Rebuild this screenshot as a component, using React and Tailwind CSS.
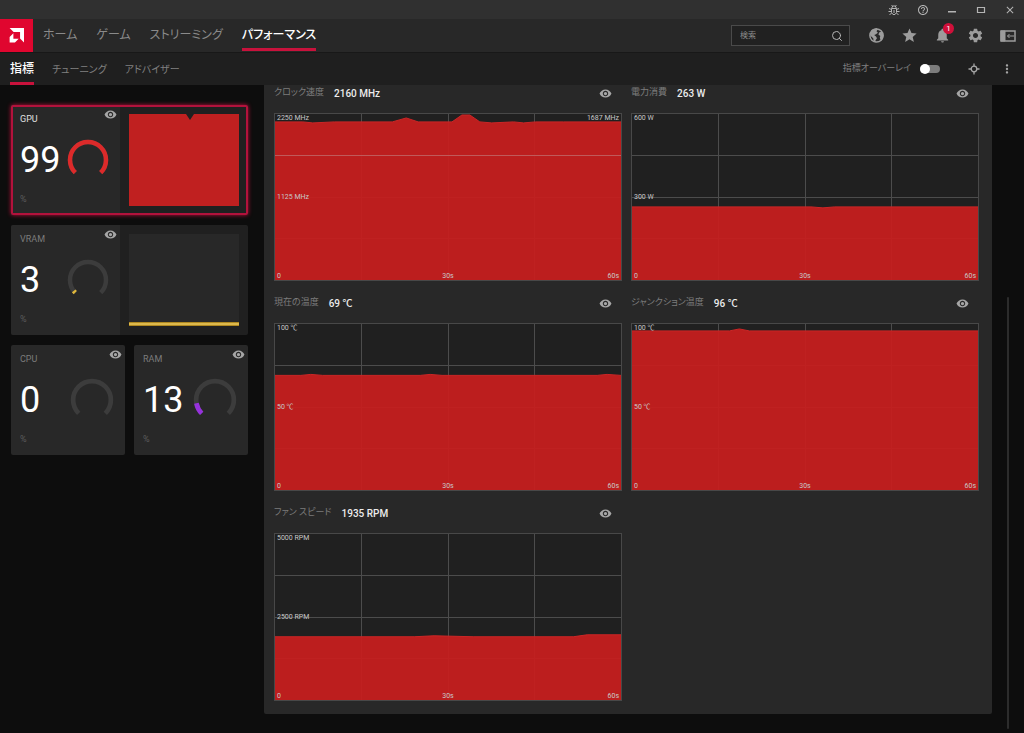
import React from "react";
import {
  MdClose,
  MdHelpOutline,
  MdMoreVert,
  MdNotifications,
  MdSettings,
  MdStar,
  MdVisibility,
} from "react-icons/md";
import { Search } from "lucide-react";

const mainTabs = ["ホーム", "ゲーム", "ストリーミング", "パフォーマンス"];
const subTabs = ["指標", "チューニング", "アドバイザー"];

// Points are [x, y] on a 348 x 168 plot.
const metrics = [
  {
    name: "クロック速度",
    value: "2160 MHz",
    top: "2250 MHz",
    mid: "1125 MHz",
    right: "1687 MHz",
    marker: true,
    points: "0,8 28,8 38,9 60,8 118,8 132,4 144,8 178,8 188,1 196,1 206,8 218,9 240,8 250,9 262,8 290,8 348,8",
  },
  {
    name: "電力消費",
    value: "263 W",
    top: "600 W",
    mid: "300 W",
    points: "0,94 180,94 192,95 204,94 348,94",
  },
  {
    name: "現在の温度",
    value: "69 ℃",
    top: "100 ℃",
    mid: "50 ℃",
    points: "0,52 26,52 36,51 48,52 146,52 156,51 168,52 324,52 334,51 348,52",
  },
  {
    name: "ジャンクション温度",
    value: "96 ℃",
    top: "100 ℃",
    mid: "50 ℃",
    points: "0,7 98,7 108,5 118,7 348,7",
  },
  {
    name: "ファン スピード",
    value: "1935 RPM",
    top: "5000 RPM",
    mid: "2500 RPM",
    points: "0,104 140,104 160,103 200,104 300,104 314,102 348,102",
  },
];

function EyeButton({ label }) {
  return (
    <button aria-label={label} className="flex text-[#a6a6a6]">
      <MdVisibility className="h-[13px] w-[13px]" />
    </button>
  );
}

function Logo() {
  return (
    <a href="#home" aria-label="AMD" className="flex h-full w-[33px] items-center justify-center bg-[#e0062f]">
      <svg viewBox="0 0 24 24" className="h-[15px] w-[15px]" fill="#fff">
        <path d="M1 0h23v23l-6.300-6.300V6.300H7.300z" />
        <path d="M7 8.500 1 14.500V23h8.500l6-6H7z" />
      </svg>
    </a>
  );
}

function BugIcon() {
  return (
    <svg viewBox="0 0 12 12" className="h-3 w-3" fill="none" stroke="currentColor">
      <path d="M3.500 4.500h5v4l-1.500 2H5l-1.500-2zM4 4.500V3l1-1h2l1 1v1.500M6 6v3" />
      <path d="M3.500 5.500 1 4.500M3.500 7.500H.5M3.500 9 1.500 11M8.500 5.500 11 4.500M8.500 7.500h3M8.500 9l2 2M4.500 2 3.500 1M7.500 2l1-1" />
    </svg>
  );
}

function GlobeIcon() {
  return (
    <svg viewBox="0 0 18 18" className="h-[17px] w-[17px]" fill="currentColor">
      <circle cx="9" cy="9" r="7" fill="none" stroke="currentColor" strokeWidth="1.600" />
      <path d="M2 8.500 4 3l5-2 1.500 1.500L9 4.500l1.500 1.500L8 8 6.500 8.500l2 1.500 1 2-1.500 2v2.500L6 15l-.5-3L3.500 10z" />
      <path d="M12 3l3 2 1.500 4-1 4-2 1.500-1-3 .5-2-2-1.500 1-2.500 2-.5z" />
    </svg>
  );
}

function DockIcon() {
  return (
    <svg viewBox="0 0 16 12" className="h-3 w-4" fill="none" stroke="currentColor">
      <path d="M1 1h14v10H1z" strokeWidth="1.500" />
      <path d="M1 1h4v10H1z" fill="currentColor" />
      <path d="M14 6H7.500M9.500 4l-2 2 2 2" />
    </svg>
  );
}

function TargetIcon() {
  return (
    <svg viewBox="0 0 12 12" className="h-3 w-3" fill="none" stroke="currentColor" strokeWidth="1.300">
      <circle cx="6" cy="6" r="2.800" />
      <path d="M6 .5v2.700M6 8.800v2.700M.5 6h2.700M8.800 6h2.700" />
    </svg>
  );
}

function TitleBar() {
  return (
    <div className="flex h-[19px] items-center justify-end gap-[17px] bg-[#303030] pr-2 text-[#b4b4b4]">
      <button aria-label="Report a bug"><BugIcon /></button>
      <button aria-label="Help"><MdHelpOutline className="h-3 w-3" /></button>
      <button aria-label="Minimize">
        <svg viewBox="0 0 12 12" className="h-3 w-3"><path d="M2 7h8v1.500H2z" fill="currentColor" /></svg>
      </button>
      <button aria-label="Maximize">
        <svg viewBox="0 0 12 12" className="h-3 w-3" fill="none" stroke="currentColor">
          <path d="M2.500 3.500h7v5h-7z" strokeWidth="1.200" />
        </svg>
      </button>
      <button aria-label="Close"><MdClose className="h-3 w-3" /></button>
    </div>
  );
}

function MainNav() {
  return (
    <header className="flex h-[33px] items-center bg-[#282828]">
      <Logo />
      <nav className="flex h-full gap-[19px] pb-px pl-[10px] text-xs">
        {mainTabs.map((tab) => (
          <a
            key={tab}
            href={`#${tab}`}
            className={
              tab === "パフォーマンス"
                ? "flex items-center border-b-[3px] border-[#c8123c] pt-[3px] font-medium text-white"
                : "flex items-center text-[#8a8a8a]"
            }
          >
            {tab}
          </a>
        ))}
      </nav>

      <div className="ml-auto flex items-center gap-4 pr-2 text-[#9c9c9c]">
        <label className="mr-[2px] flex h-[21px] w-[119px] items-center border border-[#4a4a4a] bg-[#212121] px-[6px]">
          <input
            type="text"
            aria-label="検索"
            placeholder="検索"
            className="w-full min-w-0 bg-transparent pl-[2px] text-[8px] placeholder:text-[#8c8c8c] focus:outline-none"
          />
          <Search className="h-3 w-3 shrink-0 text-[#b4b4b4]" />
        </label>
        <button aria-label="Web"><GlobeIcon /></button>
        <button aria-label="Favorites"><MdStar className="h-[17px] w-[17px]" /></button>
        <button aria-label="Notifications" className="relative">
          <MdNotifications className="h-[17px] w-[17px]" />
          <span className="absolute -top-1 -right-[3px] flex h-[11px] w-[11px] items-center justify-center rounded-full bg-[#d0103a] text-[8px] text-white">
            1
          </span>
        </button>
        <button aria-label="Settings"><MdSettings className="h-[17px] w-[17px]" /></button>
        <button aria-label="Dock panel"><DockIcon /></button>
      </div>
    </header>
  );
}

function SubNav() {
  return (
    <div className="flex h-[33px] items-center border-t border-[#181818] bg-[#1f1f1f]">
      <nav className="flex h-full gap-[18px] pl-[10px]">
        {subTabs.map((tab) => (
          <a
            key={tab}
            href={`#${tab}`}
            className={
              tab === "指標"
                ? "flex items-center border-b-[3px] border-[#c8123c] pt-[3px] text-xs font-medium text-white"
                : "flex items-center text-[10px] text-[#808080]"
            }
          >
            {tab}
          </a>
        ))}
      </nav>
      <div className="ml-auto flex items-center pr-[10px] text-[#a6a6a6]">
        <label className="flex items-center gap-[9px] text-[9px] text-[#808080]">
          指標オーバーレイ
          <span className="relative flex items-center">
            <input
              type="checkbox"
              role="switch"
              className="h-2 w-5 appearance-none rounded-full bg-[#7c7c7c]"
            />
            <span className="absolute left-0 h-[10px] w-[10px] rounded-full bg-white" />
          </span>
        </label>
        <button aria-label="Target" className="ml-[28px]"><TargetIcon /></button>
        <button aria-label="More" className="ml-5"><MdMoreVert className="h-[14px] w-[14px]" /></button>
      </div>
    </div>
  );
}

// 270 degree gauge, the gap sits at the bottom.
function Gauge({ percent, color, className }) {
  const arc = "M8.300 33.700A18 18 0 1 1 33.700 33.700";
  return (
    <svg viewBox="0 0 42 42" className={className} fill="none" strokeWidth="4.500">
      <path d={arc} stroke="#3c3c3c" />
      {percent > 0 && (
        <path d={arc} pathLength="100" stroke={color} strokeDasharray={`${percent} 200`} />
      )}
    </svg>
  );
}

function GaugeCell({ name, value, percent, color, active, large }) {
  return (
    <div className="flex h-full min-w-0 flex-1 flex-col bg-[#282828] pl-[9px]">
      <div className="flex h-6 items-start justify-between pr-[3px]">
        <span className={active ? "pt-2 text-[9px] text-[#e0e0e0]" : "pt-2 text-[9px] text-[#7c7c7c]"}>
          {name}
        </span>
        <span className="pt-[3px]"><EyeButton label={`${name} の表示`} /></span>
      </div>
      <div className="flex h-[62px] items-center justify-between pr-[11px]">
        <span className="text-[36px] leading-none text-white">{value}</span>
        <Gauge
          percent={percent}
          color={color}
          className={large ? "h-11 w-11" : "h-[42px] w-[42px]"}
        />
      </div>
      <span className="pt-[2px] text-[9px] text-[#5c5c5c]">%</span>
    </div>
  );
}

function Sidebar() {
  return (
    <aside className="flex w-[237px] shrink-0 flex-col gap-[10px] pt-5">
      <section className="relative flex h-[110px] rounded-xs bg-[#202020] shadow-[0_0_4px_#c0103c] after:pointer-events-none after:absolute after:inset-0 after:rounded-xs after:border-2 after:border-[#b3123c]">
        <div className="flex w-[109px]">
          <GaugeCell name="GPU" value="99" percent={100} color="#dc2a2a" active />
        </div>
        <div className="flex-1 p-[9px]">
          <svg viewBox="0 0 110 92" preserveAspectRatio="none" className="h-full w-full">
            <path d="M0 0H57L61 6L65 0H110V92H0Z" fill="#c02020" />
          </svg>
        </div>
      </section>

      <section className="flex h-[110px] overflow-hidden rounded-xs bg-[#202020]">
        <div className="flex w-[109px]">
          <GaugeCell name="VRAM" value="3" percent={3} color="#e0b83c" />
        </div>
        <div className="flex-1 p-[9px]">
          <div className="flex h-full items-end bg-[#282828]">
            <div className="h-1 w-full border-y border-[#b08820] bg-[#dcb84c]" />
          </div>
        </div>
      </section>

      <div className="grid grid-cols-2 gap-[9px]">
        <section className="h-[110px] overflow-hidden rounded-xs">
          <GaugeCell name="CPU" value="0" percent={0} color="#3c3c3c" large />
        </section>
        <section className="h-[110px] overflow-hidden rounded-xs">
          <GaugeCell name="RAM" value="13" percent={13} color="#9632dc" large />
        </section>
      </div>
    </aside>
  );
}

function Chart({ metric }) {
  return (
    <div className="relative h-[168px] border border-[#484848] bg-[#202020] text-[7px] leading-none text-[#c8c8c8]">
      <svg viewBox="0 0 348 168" preserveAspectRatio="none" className="absolute h-full w-full">
        <path
          d="M87 0V168M174 0V168M261 0V168M0 42H348M0 84H348M0 126H348"
          stroke="#4c4c4c"
          fill="none"
          shapeRendering="crispEdges"
          vectorEffect="non-scaling-stroke"
        />
        <polygon points={`0,168 ${metric.points} 348,168`} fill="#c81e1e" fillOpacity="0.930" />
        <polyline
          points={metric.points}
          fill="none"
          stroke="#cc2626"
          vectorEffect="non-scaling-stroke"
        />
        {metric.marker && (
          <path d="M0 42H348" stroke="#c05a5a" shapeRendering="crispEdges" vectorEffect="non-scaling-stroke" />
        )}
      </svg>
      <div className="relative flex h-full flex-col px-[2px]">
        <div className="flex h-[80px] justify-between pt-px">
          <span>{metric.top}</span>
          <span>{metric.right}</span>
        </div>
        <span>{metric.mid}</span>
        <div className="mt-auto grid grid-cols-3">
          <span>0</span>
          <span className="text-center">30s</span>
          <span className="text-right">60s</span>
        </div>
      </div>
    </div>
  );
}

function MetricPanel() {
  return (
    <section className="-mt-[14px] grid flex-1 grid-cols-2 gap-x-[9px] self-start rounded-xs bg-[#282828] pr-[13px] pb-[13px] pl-[10px]">
      {metrics.map((metric) => (
        <div key={metric.name}>
          <div className="flex h-[42px] items-center gap-[10px] pt-[2px] pr-[10px]">
            <span className="text-[9px] text-[#7c7c7c]">{metric.name}</span>
            <span className="text-[10px] font-medium text-[#ececec]">{metric.value}</span>
            <span className="ml-auto"><EyeButton label={`${metric.name} の表示`} /></span>
          </div>
          <Chart metric={metric} />
        </div>
      ))}
    </section>
  );
}

export default function App() {
  return (
    <div className="flex min-h-screen flex-col bg-[#0d0d0d] font-[Roboto,'Noto_Sans_CJK_JP',sans-serif] [font-feature-settings:'palt']">
      <TitleBar />
      <MainNav />
      <SubNav />
      <main className="flex flex-1 gap-4 overflow-hidden pl-[11px]">
        <Sidebar />
        <MetricPanel />
        <div className="-ml-4 flex w-8 justify-center pt-[212px] pb-1">
          <div className="w-[2px] rounded-full bg-[#2c2c2c]" />
        </div>
      </main>
    </div>
  );
}
